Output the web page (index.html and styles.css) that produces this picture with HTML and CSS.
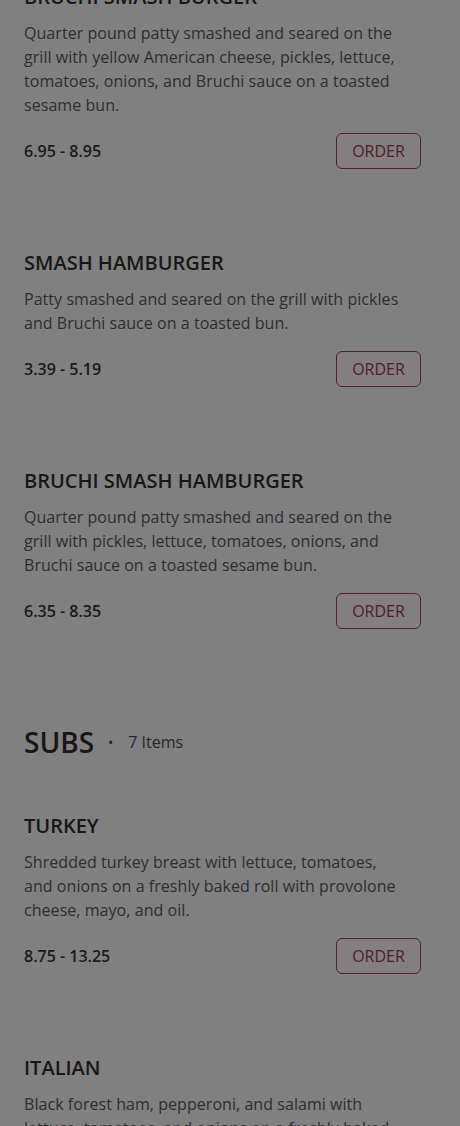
FILE: index.html
```html
<!DOCTYPE html>
<html>
<head>
<meta charset="utf-8">
<link rel="stylesheet" href="styles.css">
</head>
<body>
<main class="menu">
  <section class="section">
    <article class="item first">
      <h3 class="item-title">Bruchi Smash Burger</h3>
      <p class="item-desc">Quarter pound patty smashed and seared on the grill with yellow American cheese, pickles, lettuce, tomatoes, onions, and Bruchi sauce on a toasted sesame bun.</p>
      <div class="item-foot"><span class="price">6.95 - 8.95</span><button class="order">ORDER</button></div>
    </article>
    <article class="item">
      <h3 class="item-title">Smash Hamburger</h3>
      <p class="item-desc">Patty smashed and seared on the grill with pickles and Bruchi sauce on a toasted bun.</p>
      <div class="item-foot"><span class="price">3.39 - 5.19</span><button class="order">ORDER</button></div>
    </article>
    <article class="item">
      <h3 class="item-title">Bruchi Smash Hamburger</h3>
      <p class="item-desc">Quarter pound patty smashed and seared on the grill with pickles, lettuce, tomatoes, onions, and Bruchi sauce on a toasted sesame bun.</p>
      <div class="item-foot"><span class="price">6.35 - 8.35</span><button class="order">ORDER</button></div>
    </article>
  </section>
  <section class="section">
    <header class="section-head"><h2 class="section-title">SUBS</h2><span class="dot">•</span><span class="count">7 Items</span></header>
    <article class="item">
      <h3 class="item-title">Turkey</h3>
      <p class="item-desc">Shredded turkey breast with lettuce, tomatoes, and onions on a freshly baked roll with provolone cheese, mayo, and oil.</p>
      <div class="item-foot"><span class="price">8.75 - 13.25</span><button class="order">ORDER</button></div>
    </article>
    <article class="item">
      <h3 class="item-title">Italian</h3>
      <p class="item-desc">Black forest ham, pepperoni, and salami with lettuce, tomatoes, and onions on a freshly baked roll with provolone cheese, mayo, and oil.</p>
      <div class="item-foot"><span class="price">7.95 - 12.95</span><button class="order">ORDER</button></div>
    </article>
  </section>
</main>
</body>
</html>
```
FILE: styles.css
```css
html, body {
  margin: 0;
  padding: 0;
  background: #808080;
  overflow: hidden;
}
body {
  font-family: "Open Sans", "Liberation Sans", sans-serif;
  color: #161616;
}
.menu {
  width: 397px;
  padding: 0 24px;
  margin-top: -17px;
}
.section {
  display: flex;
  flex-direction: column;
}
.item {
  display: flex;
  flex-direction: column;
  margin-top: 80px;
}
.item.first {
  margin-top: 0;
}
.item-title {
  margin: 0;
  font-size: 20px;
  line-height: 28px;
  font-weight: 600;
  text-transform: uppercase;
  color: #171717;
}
.item-desc {
  margin: 10px 0 0;
  max-width: 385px;
  font-size: 16px;
  line-height: 24px;
  letter-spacing: 0.05px;
  color: #2e2e2e;
}
.item-foot {
  margin-top: 16px;
  display: flex;
  justify-content: space-between;
  align-items: center;
  height: 36px;
}
.price {
  font-size: 16px;
  font-weight: 600;
  color: #1a1a1a;
}
.order {
  width: 85px;
  height: 36px;
  box-sizing: border-box;
  border: 1px solid #52222c;
  border-radius: 6px;
  background: #837e80;
  color: #521c2a;
  font-family: inherit;
  font-size: 16px;
  padding: 0;
}
.section-head {
  display: flex;
  align-items: center;
  margin-top: 93px;
  height: 40px;
}
.section-title {
  margin: 0;
  font-size: 28px;
  line-height: 40px;
  font-weight: 600;
  color: #171717;
}
.dot {
  margin-left: 14px;
  font-size: 14px;
  color: #222;
}
.count {
  margin-left: 15px;
  font-size: 16px;
  color: #262626;
}
.section-head + .item {
  margin-top: 50px;
}
```
